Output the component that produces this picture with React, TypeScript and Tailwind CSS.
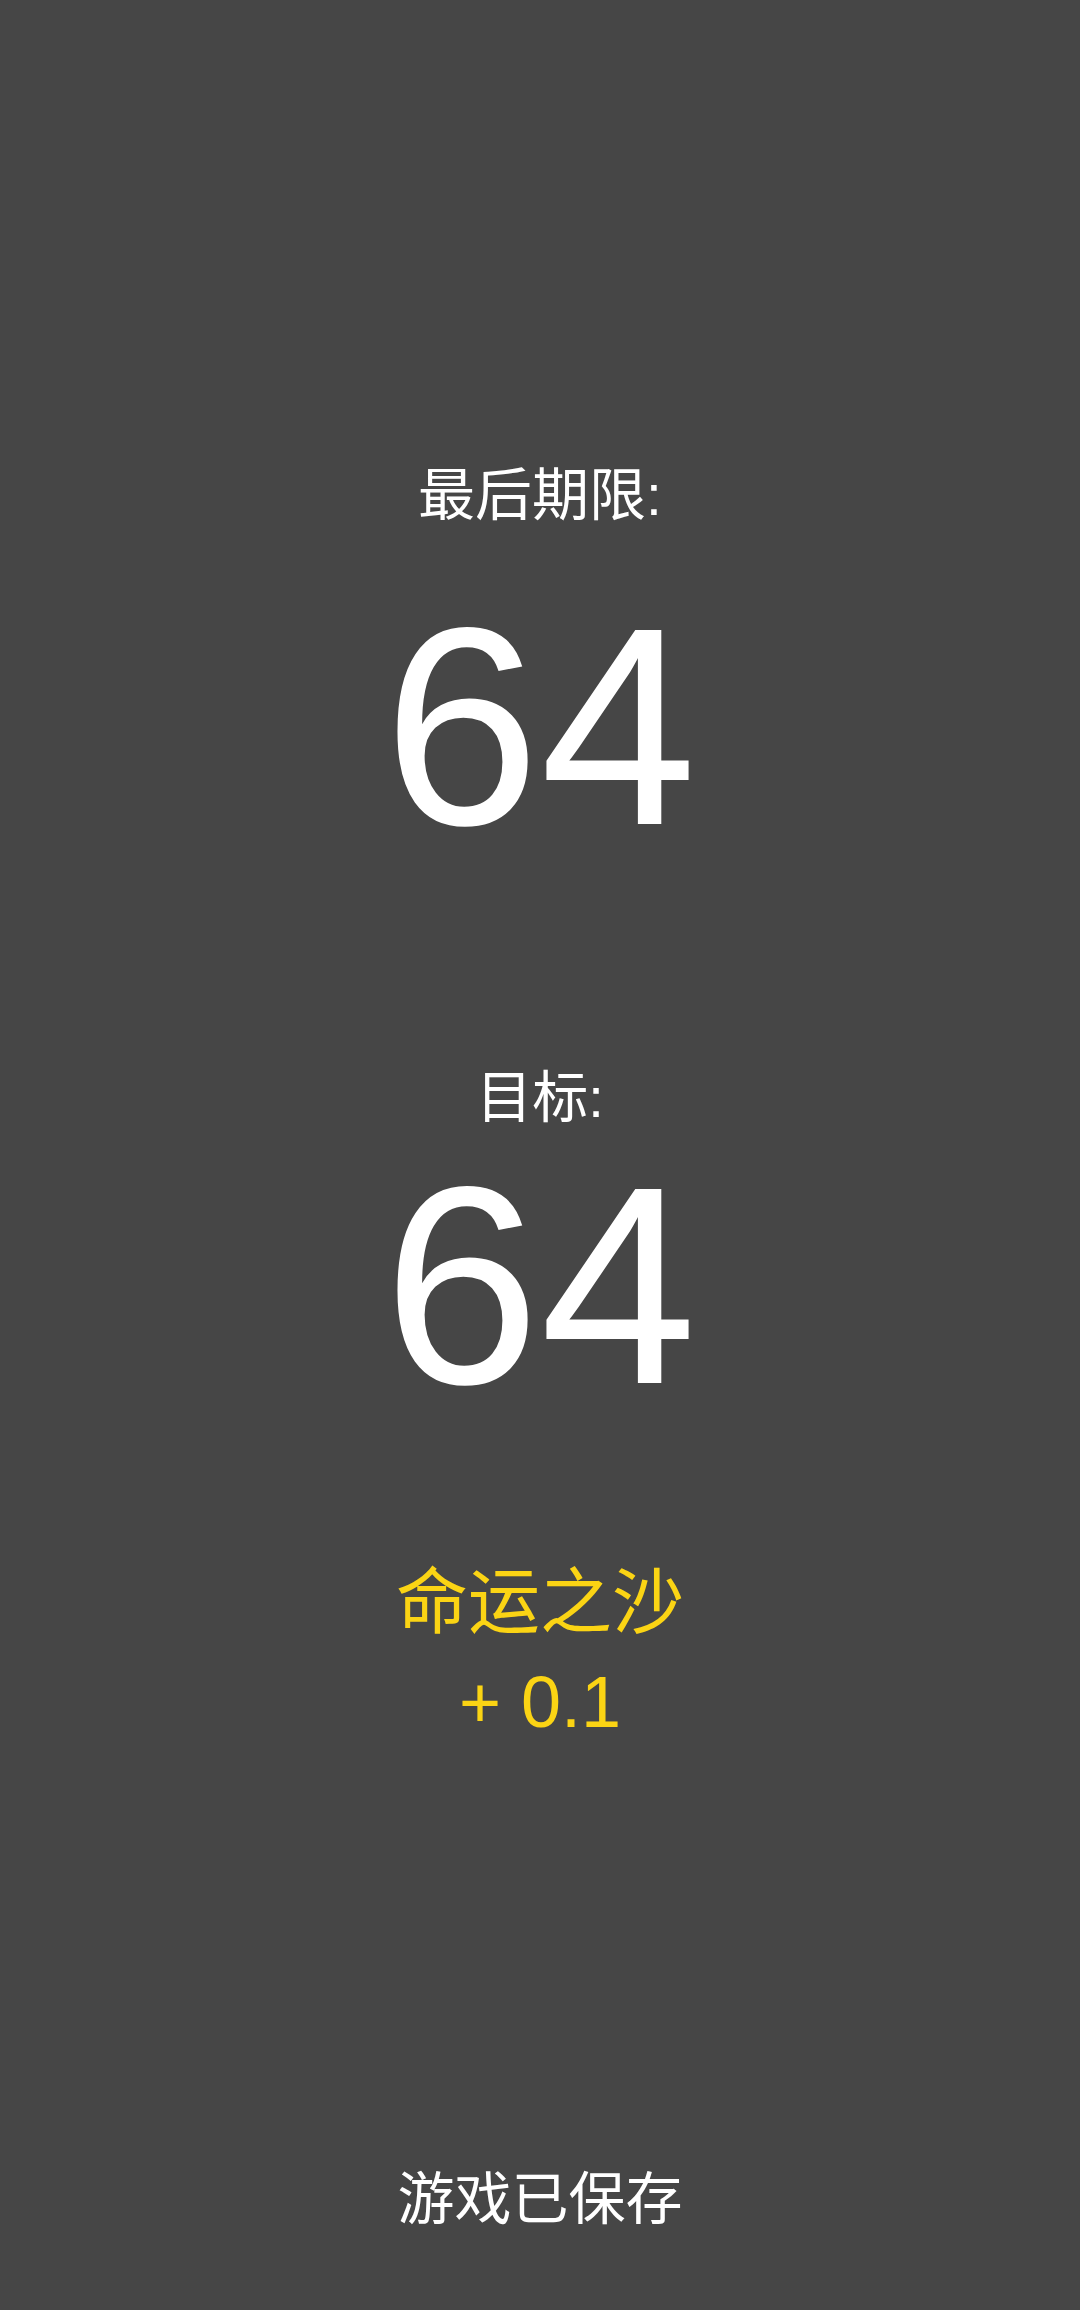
export default function App() {
  const font = "font-['Liberation_Sans','Noto_Sans_CJK_SC',sans-serif]";
  return (
    <div className={`${font} h-[2310px] w-full bg-[#464646] flex flex-col items-center text-center pt-[467px] pb-[82px]`}>
      <div className="text-[57px] leading-none text-white">最后期限:</div>
      <div className="mt-[62px] text-[282px] leading-none text-white">64</div>

      <div className="mt-[202px] text-[56px] leading-none text-white">目标:</div>
      <div className="mt-[19px] text-[282px] leading-none text-white">64</div>

      <div className="mt-[139px] text-[72px] leading-none text-[#fbd414]">命运之沙</div>
      <div className="mt-[28px] text-[72px] leading-none text-[#fbd414]">+ 0.1</div>

      <div className="mt-auto text-[57px] leading-none text-white">游戏已保存</div>
    </div>
  );
}
